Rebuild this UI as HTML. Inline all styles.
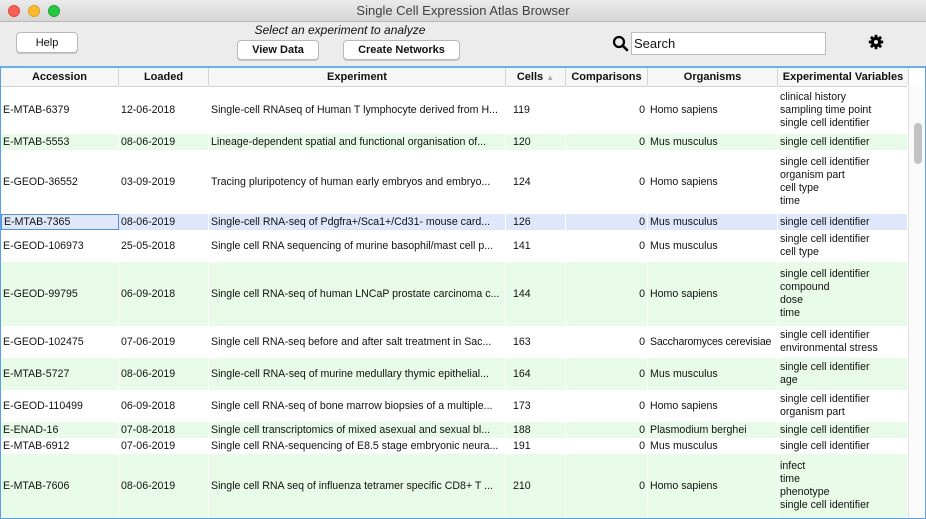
<!DOCTYPE html>
<html><head><meta charset="utf-8"><style>
*{margin:0;padding:0;box-sizing:border-box}
body{width:926px;height:519px;overflow:hidden;background:#ececec;font-family:"Liberation Sans",sans-serif;font-size:11px;color:#111;position:relative}
.abs{position:absolute}
.title{left:0;top:0;width:926px;height:22px;background:linear-gradient(#ebebeb,#d6d6d6);border-bottom:1px solid #b9b9b9;text-align:center;line-height:22px;font-size:13px;color:#404040}
.dot{width:12px;height:12px;border-radius:50%;top:5px}
.btn{background:#fff;border:1px solid #b8b8b8;border-radius:4px;text-align:center;font-size:11px;box-shadow:0 1px 0 #c8c8c8;display:flex;align-items:center;justify-content:center}
.frame{left:0;top:66px;width:926px;height:453px;border:1px solid #5aa0e6;border-top:2px solid #6aaeea;background:#fff;overflow:hidden}
.hdr{left:0;top:0;width:907px;height:19px;background:#f6f6f6;border-bottom:1px solid #d0d0d0;font-weight:bold;font-size:11px}
.hdr div{position:absolute;top:0;height:18px;line-height:18px;text-align:center;border-right:1px solid #d4d4d4}
.row{position:absolute;left:0;width:907px;font-size:10.6px}
.row.g{background:#e8fbe8}
.row.s{background:#dfe8fb}
.c{position:absolute;top:0;height:100%;display:flex;align-items:center;white-space:nowrap;overflow:hidden;border-right:1px solid #fff;padding-left:2px}
.c.v{flex-direction:column;align-items:flex-start;justify-content:center;line-height:13px}
.sb{left:907px;top:19px;width:17px;height:440px;background:#fafafa;border-left:1px solid #e2e2e2}
</style></head><body>
<div class="abs title">Single Cell Expression Atlas Browser</div>
<div class="abs dot" style="left:8px;background:#fc5f57;border:1px solid #df4a42"></div>
<div class="abs dot" style="left:28px;background:#fdbc2e;border:1px solid #dea025"></div>
<div class="abs dot" style="left:48px;background:#28c840;border:1px solid #1fa834"></div>
<div class="abs btn" style="left:16px;top:32px;width:62px;height:21px">Help</div>
<div class="abs" style="left:250px;top:22px;width:180px;text-align:center;font-style:italic;font-size:12px;line-height:16px">Select an experiment to analyze</div>
<div class="abs btn" style="left:237px;top:40px;width:82px;height:20px;font-weight:bold">View Data</div>
<div class="abs btn" style="left:343px;top:40px;width:117px;height:20px;font-weight:bold">Create Networks</div>
<svg class="abs" style="left:612px;top:35px" width="17" height="17" viewBox="0 0 17 17"><circle cx="7" cy="7" r="5" fill="none" stroke="#000" stroke-width="2.2"/><line x1="10.5" y1="10.5" x2="15" y2="15" stroke="#000" stroke-width="2.6" stroke-linecap="round"/></svg>
<div class="abs" style="left:631px;top:32px;width:195px;height:23px;background:#fff;border:1px solid #bdbdbd;font-size:13px;line-height:21px;padding-left:2px">Search</div>
<svg class="abs" style="left:868px;top:34px" width="16" height="16" viewBox="0 0 16 16"><g fill="#000"><circle cx="8" cy="8" r="5.2"/><g id="t"><rect x="6.6" y="0.8" width="2.8" height="3.5"/><rect x="6.6" y="11.7" width="2.8" height="3.5"/></g><use href="#t" transform="rotate(45 8 8)"/><use href="#t" transform="rotate(90 8 8)"/><use href="#t" transform="rotate(135 8 8)"/></g><circle cx="8" cy="8" r="2" fill="#ececec"/></svg>
<div class="abs frame">
<div class="abs hdr">
<div style="left:0;width:118px">Accession</div>
<div style="left:118px;width:90px">Loaded</div>
<div style="left:208px;width:297px">Experiment</div>
<div style="left:505px;width:60px">Cells <span style="color:#aaa;font-size:8px">&#9650;</span></div>
<div style="left:565px;width:82px">Comparisons</div>
<div style="left:647px;width:130px">Organisms</div>
<div style="left:777px;width:131px">Experimental Variables</div>
</div>
<div class="abs sb"><div class="abs" style="left:5px;top:36px;width:8px;height:41px;background:#c2c2c2;border-radius:4px"></div></div>
</div>
<div class="abs" style="left:1px;top:86px;width:907px;height:432px;overflow:hidden">
<div class="row" style="top:0;height:48px"><div class="c" style="left:0;width:118px">E-MTAB-6379</div><div class="c" style="left:118px;width:90px">12-06-2018</div><div class="c" style="left:208px;width:297px">Single-cell RNAseq of Human T lymphocyte derived from H...</div><div class="c" style="left:505px;width:60px;padding-left:7px">119</div><div class="c" style="left:565px;width:82px;justify-content:flex-end;padding-right:2px">0</div><div class="c" style="left:647px;width:130px">Homo sapiens</div><div class="c v" style="left:777px;width:130px"><span>clinical history</span><span>sampling time point</span><span>single cell identifier</span></div></div>
<div class="row g" style="top:48px;height:16px"><div class="c" style="left:0;width:118px">E-MTAB-5553</div><div class="c" style="left:118px;width:90px">08-06-2019</div><div class="c" style="left:208px;width:297px">Lineage-dependent spatial and functional organisation of...</div><div class="c" style="left:505px;width:60px;padding-left:7px">120</div><div class="c" style="left:565px;width:82px;justify-content:flex-end;padding-right:2px">0</div><div class="c" style="left:647px;width:130px">Mus musculus</div><div class="c v" style="left:777px;width:130px"><span>single cell identifier</span></div></div>
<div class="row" style="top:64px;height:64px"><div class="c" style="left:0;width:118px">E-GEOD-36552</div><div class="c" style="left:118px;width:90px">03-09-2019</div><div class="c" style="left:208px;width:297px">Tracing pluripotency of human early embryos and embryo...</div><div class="c" style="left:505px;width:60px;padding-left:7px">124</div><div class="c" style="left:565px;width:82px;justify-content:flex-end;padding-right:2px">0</div><div class="c" style="left:647px;width:130px">Homo sapiens</div><div class="c v" style="left:777px;width:130px"><span>single cell identifier</span><span>organism part</span><span>cell type</span><span>time</span></div></div>
<div class="row s" style="top:128px;height:16px"><div class="c" style="left:0;width:118px;border:1px solid #5a8fd6">E-MTAB-7365</div><div class="c" style="left:118px;width:90px">08-06-2019</div><div class="c" style="left:208px;width:297px">Single-cell RNA-seq of Pdgfra+/Sca1+/Cd31- mouse card...</div><div class="c" style="left:505px;width:60px;padding-left:7px">126</div><div class="c" style="left:565px;width:82px;justify-content:flex-end;padding-right:2px">0</div><div class="c" style="left:647px;width:130px">Mus musculus</div><div class="c v" style="left:777px;width:130px"><span>single cell identifier</span></div></div>
<div class="row" style="top:144px;height:32px"><div class="c" style="left:0;width:118px">E-GEOD-106973</div><div class="c" style="left:118px;width:90px">25-05-2018</div><div class="c" style="left:208px;width:297px">Single cell RNA sequencing of murine basophil/mast cell p...</div><div class="c" style="left:505px;width:60px;padding-left:7px">141</div><div class="c" style="left:565px;width:82px;justify-content:flex-end;padding-right:2px">0</div><div class="c" style="left:647px;width:130px">Mus musculus</div><div class="c v" style="left:777px;width:130px"><span>single cell identifier</span><span>cell type</span></div></div>
<div class="row g" style="top:176px;height:64px"><div class="c" style="left:0;width:118px">E-GEOD-99795</div><div class="c" style="left:118px;width:90px">06-09-2018</div><div class="c" style="left:208px;width:297px">Single cell RNA-seq of human LNCaP prostate carcinoma c...</div><div class="c" style="left:505px;width:60px;padding-left:7px">144</div><div class="c" style="left:565px;width:82px;justify-content:flex-end;padding-right:2px">0</div><div class="c" style="left:647px;width:130px">Homo sapiens</div><div class="c v" style="left:777px;width:130px"><span>single cell identifier</span><span>compound</span><span>dose</span><span>time</span></div></div>
<div class="row" style="top:240px;height:32px"><div class="c" style="left:0;width:118px">E-GEOD-102475</div><div class="c" style="left:118px;width:90px">07-06-2019</div><div class="c" style="left:208px;width:297px">Single cell RNA-seq before and after salt treatment in Sac...</div><div class="c" style="left:505px;width:60px;padding-left:7px">163</div><div class="c" style="left:565px;width:82px;justify-content:flex-end;padding-right:2px">0</div><div class="c" style="left:647px;width:130px;letter-spacing:-0.2px">Saccharomyces cerevisiae</div><div class="c v" style="left:777px;width:130px"><span>single cell identifier</span><span>environmental stress</span></div></div>
<div class="row g" style="top:272px;height:32px"><div class="c" style="left:0;width:118px">E-MTAB-5727</div><div class="c" style="left:118px;width:90px">08-06-2019</div><div class="c" style="left:208px;width:297px">Single-cell RNA-seq of murine medullary thymic epithelial...</div><div class="c" style="left:505px;width:60px;padding-left:7px">164</div><div class="c" style="left:565px;width:82px;justify-content:flex-end;padding-right:2px">0</div><div class="c" style="left:647px;width:130px">Mus musculus</div><div class="c v" style="left:777px;width:130px"><span>single cell identifier</span><span>age</span></div></div>
<div class="row" style="top:304px;height:32px"><div class="c" style="left:0;width:118px">E-GEOD-110499</div><div class="c" style="left:118px;width:90px">06-09-2018</div><div class="c" style="left:208px;width:297px">Single cell RNA-seq of bone marrow biopsies of a multiple...</div><div class="c" style="left:505px;width:60px;padding-left:7px">173</div><div class="c" style="left:565px;width:82px;justify-content:flex-end;padding-right:2px">0</div><div class="c" style="left:647px;width:130px">Homo sapiens</div><div class="c v" style="left:777px;width:130px"><span>single cell identifier</span><span>organism part</span></div></div>
<div class="row g" style="top:336px;height:16px"><div class="c" style="left:0;width:118px">E-ENAD-16</div><div class="c" style="left:118px;width:90px">07-08-2018</div><div class="c" style="left:208px;width:297px">Single cell transcriptomics of mixed asexual and sexual bl...</div><div class="c" style="left:505px;width:60px;padding-left:7px">188</div><div class="c" style="left:565px;width:82px;justify-content:flex-end;padding-right:2px">0</div><div class="c" style="left:647px;width:130px">Plasmodium berghei</div><div class="c v" style="left:777px;width:130px"><span>single cell identifier</span></div></div>
<div class="row" style="top:352px;height:16px"><div class="c" style="left:0;width:118px">E-MTAB-6912</div><div class="c" style="left:118px;width:90px">07-06-2019</div><div class="c" style="left:208px;width:297px">Single cell RNA-sequencing of E8.5 stage embryonic neura...</div><div class="c" style="left:505px;width:60px;padding-left:7px">191</div><div class="c" style="left:565px;width:82px;justify-content:flex-end;padding-right:2px">0</div><div class="c" style="left:647px;width:130px">Mus musculus</div><div class="c v" style="left:777px;width:130px"><span>single cell identifier</span></div></div>
<div class="row g" style="top:368px;height:64px"><div class="c" style="left:0;width:118px">E-MTAB-7606</div><div class="c" style="left:118px;width:90px">08-06-2019</div><div class="c" style="left:208px;width:297px">Single cell RNA seq of influenza tetramer specific CD8+ T ...</div><div class="c" style="left:505px;width:60px;padding-left:7px">210</div><div class="c" style="left:565px;width:82px;justify-content:flex-end;padding-right:2px">0</div><div class="c" style="left:647px;width:130px">Homo sapiens</div><div class="c v" style="left:777px;width:130px"><span>infect</span><span>time</span><span>phenotype</span><span>single cell identifier</span></div></div>
</div>
</body></html>
